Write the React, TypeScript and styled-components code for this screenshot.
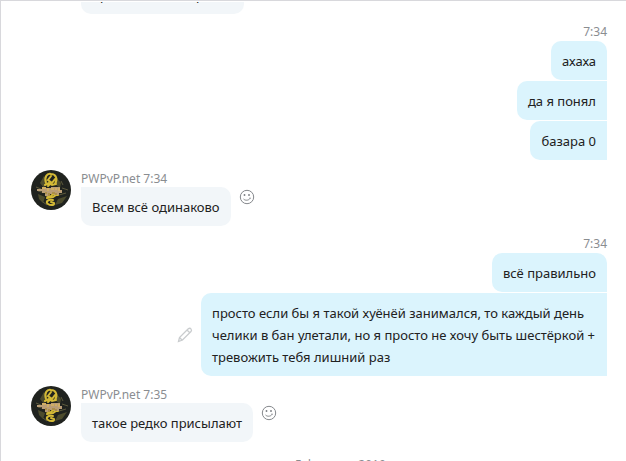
import React from "react";
import styled, { createGlobalStyle } from "styled-components";

const GlobalStyle = createGlobalStyle`
  *, *::before, *::after { box-sizing: border-box; }
  html, body { margin: 0; background: #fff; overflow: hidden; }
  body { font-family: "Noto Sans", "Open Sans", sans-serif; font-size: 13px; color: #212121; }
`;

const Chat = styled.main`
  display: flex;
  flex-direction: column;
  height: 100vh;
  overflow: hidden;
  border-left: 1px solid #d8d8dc;
  border-top: 1px solid #d8d8dc;
  padding: 1px 19px 0 30px;

  & > * { flex-shrink: 0; }
`;

const Clipped = styled.div`
  display: flex;
  align-items: flex-end;
  height: 12px;
  margin-left: 50px;
  overflow: hidden;
`;

const Sent = styled.section`
  display: flex;
  flex-direction: column;
  align-items: flex-end;
  gap: 1px;
  padding-top: 9px;
`;

const Received = styled.section`
  display: grid;
  grid-template-columns: 40px 1fr;
  column-gap: 10px;
  padding-top: 10px;
`;

const Meta = styled.div`
  color: #8a8d91;
  font-size: 12px;
  line-height: 17px;
`;

const Row = styled.div`
  display: flex;
  gap: 8px;
`;

const Bubble = styled.p<{ $kind: "in" | "out"; $first?: boolean }>`
  margin: 0;
  padding: 9px 11px 8px;
  max-width: 406px;
  line-height: 22px;
  background: ${(p) => (p.$kind === "out" ? "#dbf4fd" : "#f2f6f9")};
  border-radius: ${(p) =>
    p.$kind === "out" ? (p.$first ? "10px 10px 0 10px" : "10px 0 0 10px") : "0 10px 10px 10px"};
`;

const IconButton = styled.button`
  display: flex;
  align-self: flex-start;
  padding: 0;
  margin-top: 2px;
  border: 0;
  background: none;
  color: #85888c;
`;

const EditButton = styled(IconButton)`
  align-self: center;
  margin-top: 0;
  color: #c9ccce;
`;

const Avatar = () => (
  <svg width="40" height="40" viewBox="0 0 40 40" role="img" aria-label="PWPvP.net">
    <circle cx="20" cy="20" r="20" fill="#20231f" />
    <path d="M9 13l4-7 3 4-3 8zM7 24l7 3-2 6-4-4zM27 29l9-3-5 7-7 2zM25 7l5 6-1 5-4-3z" fill="#4d4c2d" />
    <path d="M5 17l5 2M7 21l4 1M30 11l2 4M28 25l7-2M12 32l4 3M31 18l6 2" stroke="#5d5a3c" />
    <g fill="none" stroke="#d3b936" strokeLinecap="round">
      <path d="M15 13c-2-6 1-10 5-9 5 0 7 5 4 10M20 6l-3 4 4 3 3-4" strokeWidth="2" />
      <path d="M14 15l4-2 3 2 4-1M17 16l3-3" strokeWidth="2" />
      <path d="M15 25l4 2 3-3 5 1M16 28l6-1 3-2" strokeWidth="2" />
      <path d="M22 30c-5-1-8 2-5 4s7 1 6-1l-3-1" strokeWidth="2" />
    </g>
    <path d="M11 17h4v1h5v-1h9v3h2v3h-3v2h-5v-1h-4v2h-5v-3h-3v-2H6v-2h5z" fill="#b99d76" />
    <path d="M11 18h4M17 18v3M20 19h3M25 18v2M28 18v3" stroke="#d8b45d" strokeWidth="1.5" />
    <path d="M14 23h2M18 23v3M21 23h3M25 23v2" stroke="#a88a3c" strokeWidth="1.5" />
  </svg>
);

const Smile = () => (
  <IconButton type="button" aria-label="Реакция">
    <svg width="16" height="16" viewBox="0 0 16 16" fill="none" stroke="currentColor">
      <circle cx="8" cy="8" r="6.7" />
      <path d="M4.500 10c1.500 1.700 5 1.700 6.500-.5M11 8.500v1.500" />
      <path d="M5.500 5v2M10 5v2" strokeWidth="1.5" />
    </svg>
  </IconButton>
);

const Pencil = () => (
  <EditButton type="button" aria-label="Изменить">
    <svg width="16" height="16" viewBox="0 0 16 16" fill="none" stroke="currentColor" strokeWidth="1.3">
      <path d="M1.500 14.500l1-4 8.500-8.500q2-1.500 3 0t0 2.500l-8.500 8.500zM10 3l3 3M2.500 10.500l3 3" />
    </svg>
  </EditButton>
);

const DateLine = styled.div`
  padding-top: 14px;
  text-align: center;
  color: #8a8d91;
  font-size: 12px;
  line-height: 18px;
`;

export default function App() {
  return (
    <>
      <GlobalStyle />
      <Chat>
        <Clipped>
          <Bubble $kind="in">проблема наша росла</Bubble>
        </Clipped>
        <Sent>
          <Meta>7:34</Meta>
          <Bubble $kind="out" $first>ахаха</Bubble>
          <Bubble $kind="out">да я понял</Bubble>
          <Bubble $kind="out">базара 0</Bubble>
        </Sent>
        <Received>
          <Avatar />
          <div>
            <Meta>PWPvP.net 7:34</Meta>
            <Row>
              <Bubble $kind="in">Всем всё одинаково</Bubble>
              <Smile />
            </Row>
          </div>
        </Received>
        <Sent>
          <Meta>7:34</Meta>
          <Bubble $kind="out" $first>всё правильно</Bubble>
          <Row>
            <Pencil />
            <Bubble $kind="out">
              просто если бы я такой хуёнёй занимался, то каждый день челики в бан улетали, но я просто не
              хочу быть шестёркой + тревожить тебя лишний раз
            </Bubble>
          </Row>
        </Sent>
        <Received>
          <Avatar />
          <div>
            <Meta>PWPvP.net 7:35</Meta>
            <Row>
              <Bubble $kind="in">такое редко присылают</Bubble>
              <Smile />
            </Row>
          </div>
        </Received>
        <DateLine>вторник, 5 февраля 2019 г.</DateLine>
      </Chat>
    </>
  );
}
